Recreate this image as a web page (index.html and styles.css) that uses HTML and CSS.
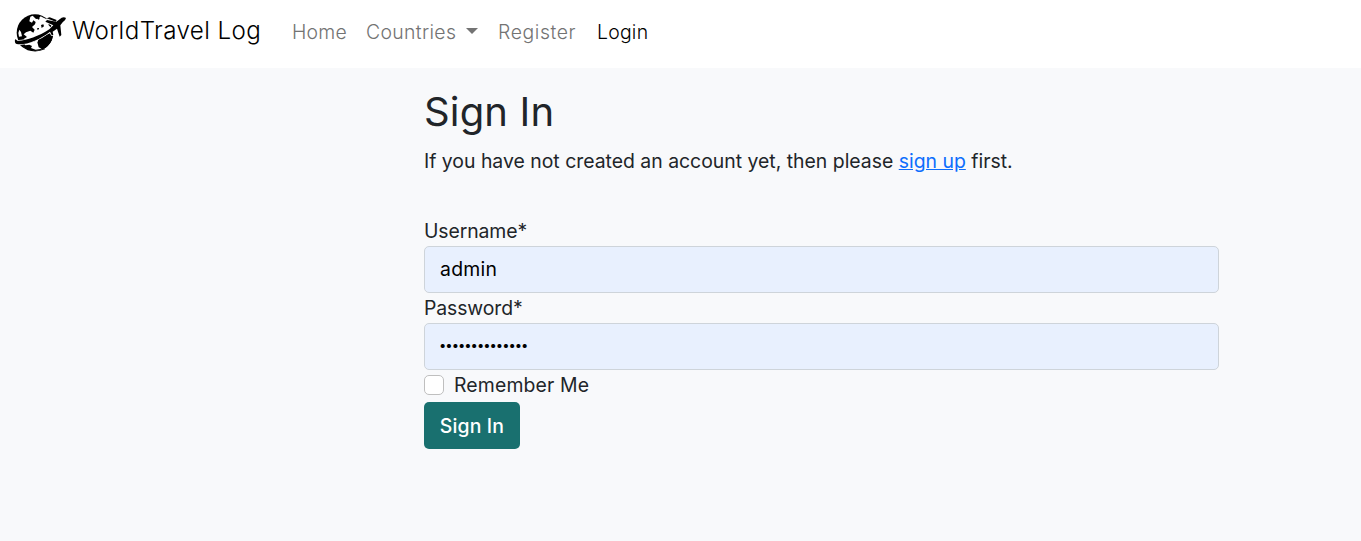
FILE: index.html
```html
<!DOCTYPE html>
<html lang="en">
<head>
<meta charset="utf-8">
<title>WorldTravel Log</title>
<link rel="stylesheet" href="styles.css">
</head>
<body>
<nav class="navbar">
  <a class="brand" href="#">
    <svg class="logo" viewBox="0 0 192 168" width="64" height="56" aria-hidden="true">
      <circle cx="81" cy="86" r="55"/>
      <path fill="#fff" d="M67 38 L74 35 L84 45 L91 44 L98 37 L112 44 L121 53 L130 64 L133 81 L116 94 L103 102 L67 113 L54 112 L48 104 L57 99 L47 91 L54 85 L67 80 L76 86 L80 77 L72 69 L81 61 L83 54 L76 49 L72 56 L64 52Z"/>
      <path d="M99 63 L106 61 L108 67 L101 72ZM87 73 L93 72 L93 76 L88 77ZM88 40 L95 41 L94 46 L90 47Z"/>
      <path fill="#fff" d="M34 77 L39 84 L42 97 L33 98 L31 87ZM49 119 L78 113 L91 105 L90 116 L99 123 L103 130 L97 135 L83 137 L69 132 L72 126 L64 122 L52 124Z"/>
      <path d="M36 118 Q48 132 62 134 L80 140 Q98 140 108 132 L111 136 Q86 147 59 139 Q42 131 32 119Z"/>
      <path fill="#fff" d="M108 42 L132 54 L140 84 L126 96 L119 84 L131 69Z"/>
      <path d="M124 58 Q132 65 134 76 L130 77 Q129 69 121 62ZM92 130 L88 115 L94 104 L133 84 Q139 108 117 128 Q106 138 92 130Z"/>
      <path stroke="#fff" stroke-width="5" paint-order="stroke" d="M21 106 Q25 107 28 110 C50 112 91 98 124 76 L136 64 L112 53 L117 48 L145 53 L161 41 Q169 38 174 42 Q173 49 164 55 L157 64 L160 93 L155 98 L147 74 L134 83 L136 93 L131 93 L126 83 C94 108 55 124 26 120 Q19 118 21 106Z"/>
      <path d="M116 43 L125 40 L146 48 L143 53Z"/>
    </svg>
    <span class="brand-name">WorldTravel Log</span>
  </a>
  <div class="links">
    <a class="link home" href="#">Home</a>
    <a class="link countries" href="#"><span>Countries</span><i class="caret"></i></a>
    <a class="link register" href="#">Register</a>
    <a class="link login active" href="#">Login</a>
  </div>
</nav>
<main class="content">
  <h1 class="title">Sign In</h1>
  <p class="intro">If you have not created an account yet, then please <a class="signup" href="#">sign up</a> first.</p>
  <form class="form">
    <label class="label" for="username">Username*</label>
    <input class="field" id="username" type="text" value="admin">
    <label class="label" for="password">Password*</label>
    <input class="field secret" id="password" type="password" value="aaaaaaaaaaaaaa">
    <label class="remember"><input class="check" type="checkbox"><span>Remember Me</span></label>
    <button class="submit" type="button">Sign In</button>
  </form>
</main>
</body>
</html>
```
FILE: styles.css
```css
* { box-sizing: border-box; }
body {
  margin: 0;
  background: #f8f9fb;
  color: #212529;
  font: 400 19.4px/30px Inter, "Open Sans", sans-serif;
}
.navbar {
  height: 68px;
  background: #fff;
  display: flex;
  align-items: flex-start;
  padding: 4px 0 0 8px;
}
.brand {
  display: flex;
  color: #000;
  text-decoration: none;
  font-size: 24.2px;
  font-weight: 300;
  letter-spacing: 0.4px;
}
.logo { display: block; }
.brand-name { width: 190px; padding: 12px 0 0; white-space: nowrap; }
.links { display: flex; gap: 20px; padding: 13px 0 0 30px; font-weight: 300; letter-spacing: 0.25px; }
.link { display: flex; align-items: center; color: #737373; text-decoration: none; white-space: nowrap; }
.home { width: 54px; }
.countries { width: 112px; justify-content: space-between; letter-spacing: 0.35px; }
.register { width: 79px; letter-spacing: 0.6px; }
.active { color: #000; }
.caret { border: 6px solid transparent; border-top-color: currentColor; border-bottom: 0; margin-top: -3px; }
.content { width: 795px; margin-left: 424px; padding-top: 20px; }
.title { margin: 0 0 10px; font-size: 40px; line-height: 48px; font-weight: 400; letter-spacing: 0.15px; }
.intro { margin: 0 0 40px; white-space: nowrap; }
.signup { color: #0d6efd; text-decoration: underline; }
.form { display: flex; flex-direction: column; align-items: flex-start; }
.label { height: 30px; letter-spacing: -0.1px; }
.field {
  width: 100%;
  height: 47px;
  padding: 0 15px 2px;
  border: 1px solid #ced4da;
  border-radius: 5px;
  background: #e8f0fe;
  color: #000;
  font: inherit;
  letter-spacing: 0.25px;
  outline: 0;
}
.secret { padding: 0 14px 4px; font-size: 13px; letter-spacing: -1px; }
.remember { display: flex; align-items: center; gap: 10px; height: 30px; letter-spacing: 0.15px; }
.check {
  appearance: none;
  width: 20px;
  height: 20px;
  margin: 0;
  border: 1px solid #bfbfbf;
  border-radius: 5px;
  background: #fff;
}
.submit {
  width: 96px;
  height: 47px;
  margin-top: 2px;
  padding: 0;
  border: 0;
  border-radius: 5px;
  background: #19706f;
  color: #fff;
  font: inherit;
  font-weight: 500;
  letter-spacing: 0.15px;
}
```
